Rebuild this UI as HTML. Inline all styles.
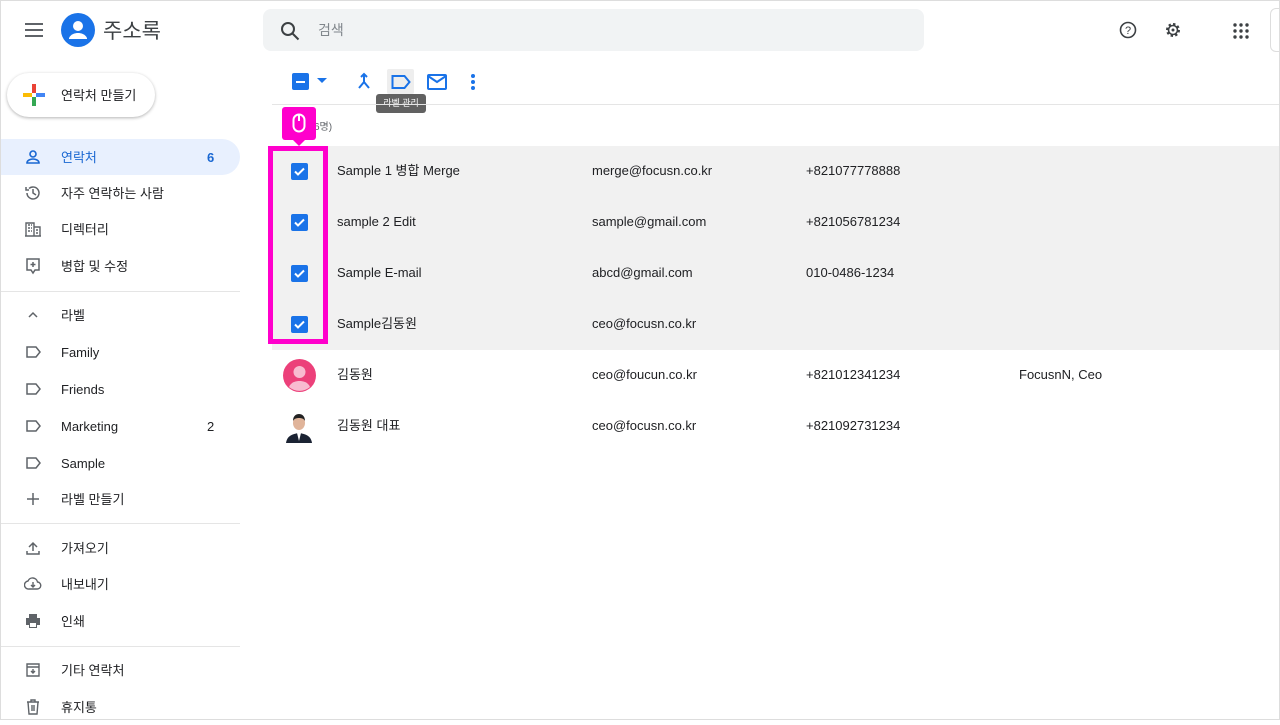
<!DOCTYPE html><html><head><meta charset="utf-8"><style>
*{box-sizing:border-box;margin:0;padding:0}
body{width:1280px;height:720px;overflow:hidden;background:#fff;font-family:"Liberation Sans","Noto Sans CJK KR",sans-serif;color:#202124;position:relative}
.a{position:absolute}
.t{font-size:13px;white-space:nowrap;line-height:15px}
.nav{position:absolute;left:0;width:240px;height:36px;font-size:13px;line-height:15px}
.nav .ic{position:absolute;left:24px;top:9px;width:18px;height:18px}
.nav .lb{position:absolute;left:61px;top:11px}
.nav .ct{position:absolute;left:207px;top:11px}
.div{position:absolute;left:0;width:240px;height:1px;background:#e5e5e5}
.cb{position:absolute;left:291px;width:17px;height:17px;background:#1a73e8;border-radius:2px}
</style></head><body>
<div class="a" style="left:0;top:0;width:1280px;height:720px;border:1px solid #ddd;z-index:9;pointer-events:none"></div>
<svg class="a" style="left:24px;top:21px" width="20" height="18"><path d="M1 3h18M1 9h18M1 15h18" stroke="#5f6368" stroke-width="2"/></svg>
<svg class="a" style="left:61px;top:13px" width="34" height="34"><circle cx="17" cy="17" r="17" fill="#1a73e8"/><circle cx="17" cy="13" r="5" fill="#fff"/><path d="M8 25c2-4 6-5 9-5s7 1 9 5v1H8z" fill="#fff"/></svg>
<div class="a" style="left:103px;top:19px;font-size:21px;line-height:26px;color:#3c4043">주소록</div>
<div class="a" style="left:263px;top:9px;width:661px;height:42px;background:#f1f3f4;border-radius:8px"></div>
<svg class="a" style="left:280px;top:21px" width="20" height="20"><circle cx="8" cy="8" r="6" fill="none" stroke="#3c4043" stroke-width="2"/><path d="M12.5 12.5l6 6" stroke="#3c4043" stroke-width="2"/></svg>
<div class="a" style="left:318px;top:22px;font-size:14px;line-height:17px;color:#80868b">검색</div>
<svg class="a" style="left:1119px;top:21px" width="18" height="18"><circle cx="9" cy="9" r="7.5" fill="none" stroke="#3c4043" stroke-width="1.6"/><text x="9" y="13" font-size="11" text-anchor="middle" fill="#3c4043" font-family="Liberation Sans">?</text></svg>
<svg class="a" style="left:1164px;top:21px" width="18" height="18"><circle cx="9" cy="9" r="5.5" fill="none" stroke="#3c4043" stroke-width="3" stroke-dasharray="2.2 2.1"/><circle cx="9" cy="9" r="4.5" fill="none" stroke="#3c4043" stroke-width="1.6"/><circle cx="9" cy="9" r="1.5" fill="#3c4043"/></svg>
<svg class="a" style="left:1233px;top:23px" width="16" height="16" fill="#3c4043"><circle cx="2" cy="2" r="1.7"/><circle cx="8" cy="2" r="1.7"/><circle cx="14" cy="2" r="1.7"/><circle cx="2" cy="8" r="1.7"/><circle cx="8" cy="8" r="1.7"/><circle cx="14" cy="8" r="1.7"/><circle cx="2" cy="14" r="1.7"/><circle cx="8" cy="14" r="1.7"/><circle cx="14" cy="14" r="1.7"/></svg>
<div class="a" style="left:1270px;top:8px;width:20px;height:44px;border:1px solid #ddd;border-radius:6px"></div>
<div class="a" style="left:7px;top:73px;width:148px;height:44px;border-radius:22px;box-shadow:0 1px 3px rgba(0,0,0,.3);background:#fff"></div>
<svg class="a" style="left:23px;top:84px" width="22" height="22"><rect x="9" y="0" width="4" height="9" fill="#ea4335"/><rect x="13" y="9" width="9" height="4" fill="#4285f4"/><rect x="9" y="13" width="4" height="9" fill="#34a853"/><rect x="0" y="9" width="9" height="4" fill="#fbbc04"/></svg>
<div class="a t" style="left:61px;top:88px">연락처 만들기</div>
<div class="nav" style="top:139px;background:#e8f0fe;border-radius:0 18px 18px 0;color:#1967d2">
<svg class="ic" viewBox="0 0 18 18"><circle cx="9" cy="6" r="3" fill="none" stroke="#1967d2" stroke-width="1.6"/><path d="M3 15c0-3 4-4 6-4s6 1 6 4z" fill="none" stroke="#1967d2" stroke-width="1.6"/></svg>
<span class="lb">연락처</span><span class="ct" style="font-weight:bold">6</span></div>
<div class="nav" style="top:175px"><svg class="ic" viewBox="0 0 18 18"><path d="M3 9a6 6 0 1 0 2-4.5M2 3v3h3M9 5v4l3 2" fill="none" stroke="#5f6368" stroke-width="1.5"/></svg><span class="lb">자주 연락하는 사람</span></div>
<div class="nav" style="top:211px"><svg class="ic" viewBox="0 0 18 18"><path d="M2 16V3h8v13M10 7h6v9M1 16h16M4 5h2M7 5h1M4 8h2M7 8h1M4 11h2M7 11h1M12 10h2M12 13h2" fill="none" stroke="#5f6368" stroke-width="1.4"/></svg><span class="lb">디렉터리</span></div>
<div class="nav" style="top:248px"><svg class="ic" viewBox="0 0 18 18"><path d="M3 2h12v11H11l-2 3-2-3H3z M9 5v5M6.5 7.5h5" fill="none" stroke="#5f6368" stroke-width="1.5"/></svg><span class="lb">병합 및 수정</span></div>
<div class="div" style="top:291px"></div>
<div class="nav" style="top:297px"><svg class="ic" viewBox="0 0 18 18"><path d="M5 11l4-4 4 4" fill="none" stroke="#5f6368" stroke-width="1.5"/></svg><span class="lb">라벨</span></div>
<div class="nav" style="top:334px"><svg class="ic" viewBox="0 0 18 18"><path d="M3 4h9l4 5-4 5H3z" fill="none" stroke="#5f6368" stroke-width="1.5"/></svg><span class="lb">Family</span></div>
<div class="nav" style="top:371px"><svg class="ic" viewBox="0 0 18 18"><path d="M3 4h9l4 5-4 5H3z" fill="none" stroke="#5f6368" stroke-width="1.5"/></svg><span class="lb">Friends</span></div>
<div class="nav" style="top:408px"><svg class="ic" viewBox="0 0 18 18"><path d="M3 4h9l4 5-4 5H3z" fill="none" stroke="#5f6368" stroke-width="1.5"/></svg><span class="lb">Marketing</span><span class="ct">2</span></div>
<div class="nav" style="top:445px"><svg class="ic" viewBox="0 0 18 18"><path d="M3 4h9l4 5-4 5H3z" fill="none" stroke="#5f6368" stroke-width="1.5"/></svg><span class="lb">Sample</span></div>
<div class="nav" style="top:481px"><svg class="ic" viewBox="0 0 18 18"><path d="M9 3v12M3 9h12" fill="none" stroke="#5f6368" stroke-width="1.5"/></svg><span class="lb">라벨 만들기</span></div>
<div class="div" style="top:523px"></div>
<div class="nav" style="top:530px"><svg class="ic" viewBox="0 0 18 18"><path d="M9 12V4M5 8l4-4 4 4M3 12v3h12v-3" fill="none" stroke="#5f6368" stroke-width="1.5"/></svg><span class="lb">가져오기</span></div>
<div class="nav" style="top:566px"><svg class="ic" viewBox="0 0 18 18"><path d="M5 14a4 4 0 0 1-1-8 5 5 0 0 1 9.5 1A3.5 3.5 0 0 1 13 14z M9 7v5M7 10l2 2 2-2" fill="none" stroke="#5f6368" stroke-width="1.4"/></svg><span class="lb">내보내기</span></div>
<div class="nav" style="top:603px"><svg class="ic" viewBox="0 0 18 18"><path d="M5 2h8v4H5z M2 6h14v7h-3v3H5v-3H2z" fill="#5f6368"/><rect x="6" y="11" width="6" height="4" fill="#fff"/></svg><span class="lb">인쇄</span></div>
<div class="div" style="top:646px"></div>
<div class="nav" style="top:652px"><svg class="ic" viewBox="0 0 18 18"><path d="M3 3h12v12H3z M3 6h12M9 8v4M7 10l2 2 2-2" fill="none" stroke="#5f6368" stroke-width="1.4"/></svg><span class="lb">기타 연락처</span></div>
<div class="nav" style="top:689px"><svg class="ic" viewBox="0 0 18 18"><path d="M3 4h12M7 4V2h4v2M4 4l1 12h8l1-12M8 7v6M10 7v6" fill="none" stroke="#5f6368" stroke-width="1.4"/></svg><span class="lb">휴지통</span></div>
<div class="a" style="left:292px;top:73px;width:17px;height:17px;background:#1a73e8;border-radius:2px"><div style="position:absolute;left:4px;top:7.5px;width:9px;height:2px;background:#fff"></div></div>
<svg class="a" style="left:317px;top:78px" width="10" height="6"><path d="M0 0h10L5 5z" fill="#1a73e8"/></svg>
<svg class="a" style="left:356px;top:72px" width="16" height="18"><path d="M8 2v8L3 16M8 10l5 6M5 5l3-3 3 3" fill="none" stroke="#1a73e8" stroke-width="2"/></svg>
<div class="a" style="left:387px;top:69px;width:27px;height:25px;background:#eee;border-radius:2px"></div>
<svg class="a" style="left:391px;top:74px" width="20" height="16"><path d="M1.5 2h12l5 6-5 6h-12z" fill="none" stroke="#1a73e8" stroke-width="2"/></svg>
<svg class="a" style="left:427px;top:74px" width="20" height="16"><rect x="1" y="1" width="18" height="14" rx="1" fill="none" stroke="#1a73e8" stroke-width="2"/><path d="M1 2l9 6 9-6" fill="none" stroke="#1a73e8" stroke-width="2"/></svg>
<svg class="a" style="left:470px;top:73px" width="6" height="18" fill="#1a73e8"><circle cx="3" cy="3" r="2"/><circle cx="3" cy="9" r="2"/><circle cx="3" cy="15" r="2"/></svg>
<div class="a" style="left:376px;top:94px;width:50px;height:19px;background:#616161;border-radius:3px;color:#fff;font-size:9px;text-align:center;line-height:19px">라벨 관리</div>
<div class="a" style="left:272px;top:104px;width:1008px;height:1px;background:#e5e5e5"></div>
<div class="a" style="left:314px;top:122px;font-size:10px;line-height:12px;color:#5f6368">6명)</div>
<div class="a" style="left:272px;top:146px;width:1008px;height:204px;background:#f1f1f1"></div>
<div class="cb" style="top:163px"></div><div class="cb" style="top:214px"></div><div class="cb" style="top:265px"></div><div class="cb" style="top:316px"></div>
<svg class="a" style="left:291px;top:163px" width="17" height="170"><g fill="none" stroke="#fff" stroke-width="2"><path d="M4 8.5l3 3 6-6"/><path d="M4 59.5l3 3 6-6"/><path d="M4 110.5l3 3 6-6"/><path d="M4 161.5l3 3 6-6"/></g></svg>
<div class="a" style="left:268px;top:146px;width:60px;height:198px;border:5px solid #ff00cc"></div>
<div class="a" style="left:282px;top:107px;width:34px;height:33px;background:#ff00cc;border-radius:3px"></div>
<svg class="a" style="left:292px;top:139px" width="14" height="7"><path d="M0 0h14L7 7z" fill="#ff00cc"/></svg>
<svg class="a" style="left:292px;top:113px" width="14" height="20"><rect x="1.5" y="1.5" width="11" height="17" rx="5.5" fill="none" stroke="#fff" stroke-width="2"/><path d="M7 2v6" stroke="#fff" stroke-width="2"/></svg>
<svg class="a" style="left:283px;top:359px" width="33" height="33"><circle cx="16.5" cy="16.5" r="16.5" fill="#ec407a"/><circle cx="16.5" cy="13" r="6" fill="#f8bbd0"/><path d="M6 28c2-5 7-6 10.5-6s8.5 1 10.5 6a16 16 0 0 1-21 0z" fill="#f8bbd0"/></svg>
<svg class="a" style="left:284px;top:411px" width="30" height="32"><path d="M2 32c1-7 6-9 13-10 7 1 12 3 13 10z" fill="#1b2333"/><path d="M13 22l2 8 2-8z" fill="#fff"/><ellipse cx="15" cy="12" rx="6" ry="7" fill="#e0b49a"/><path d="M9 10c0-5 3-7 6-7s6 2 6 7c-1-2-3-3-6-3s-5 1-6 3z" fill="#222"/></svg>
<div class="a t" style="left:337px;top:163px">Sample 1 병합 Merge</div><div class="a t" style="left:592px;top:163px">merge@focusn.co.kr</div><div class="a t" style="left:806px;top:163px">+821077778888</div>
<div class="a t" style="left:337px;top:214px">sample 2 Edit</div><div class="a t" style="left:592px;top:214px">sample@gmail.com</div><div class="a t" style="left:806px;top:214px">+821056781234</div>
<div class="a t" style="left:337px;top:265px">Sample E-mail</div><div class="a t" style="left:592px;top:265px">abcd@gmail.com</div><div class="a t" style="left:806px;top:265px">010-0486-1234</div>
<div class="a t" style="left:337px;top:316px">Sample김동원</div><div class="a t" style="left:592px;top:316px">ceo@focusn.co.kr</div>
<div class="a t" style="left:337px;top:367px">김동원</div><div class="a t" style="left:592px;top:367px">ceo@foucun.co.kr</div><div class="a t" style="left:806px;top:367px">+821012341234</div><div class="a t" style="left:1019px;top:367px">FocusnN, Ceo</div>
<div class="a t" style="left:337px;top:418px">김동원 대표</div><div class="a t" style="left:592px;top:418px">ceo@focusn.co.kr</div><div class="a t" style="left:806px;top:418px">+821092731234</div>
</body></html>
